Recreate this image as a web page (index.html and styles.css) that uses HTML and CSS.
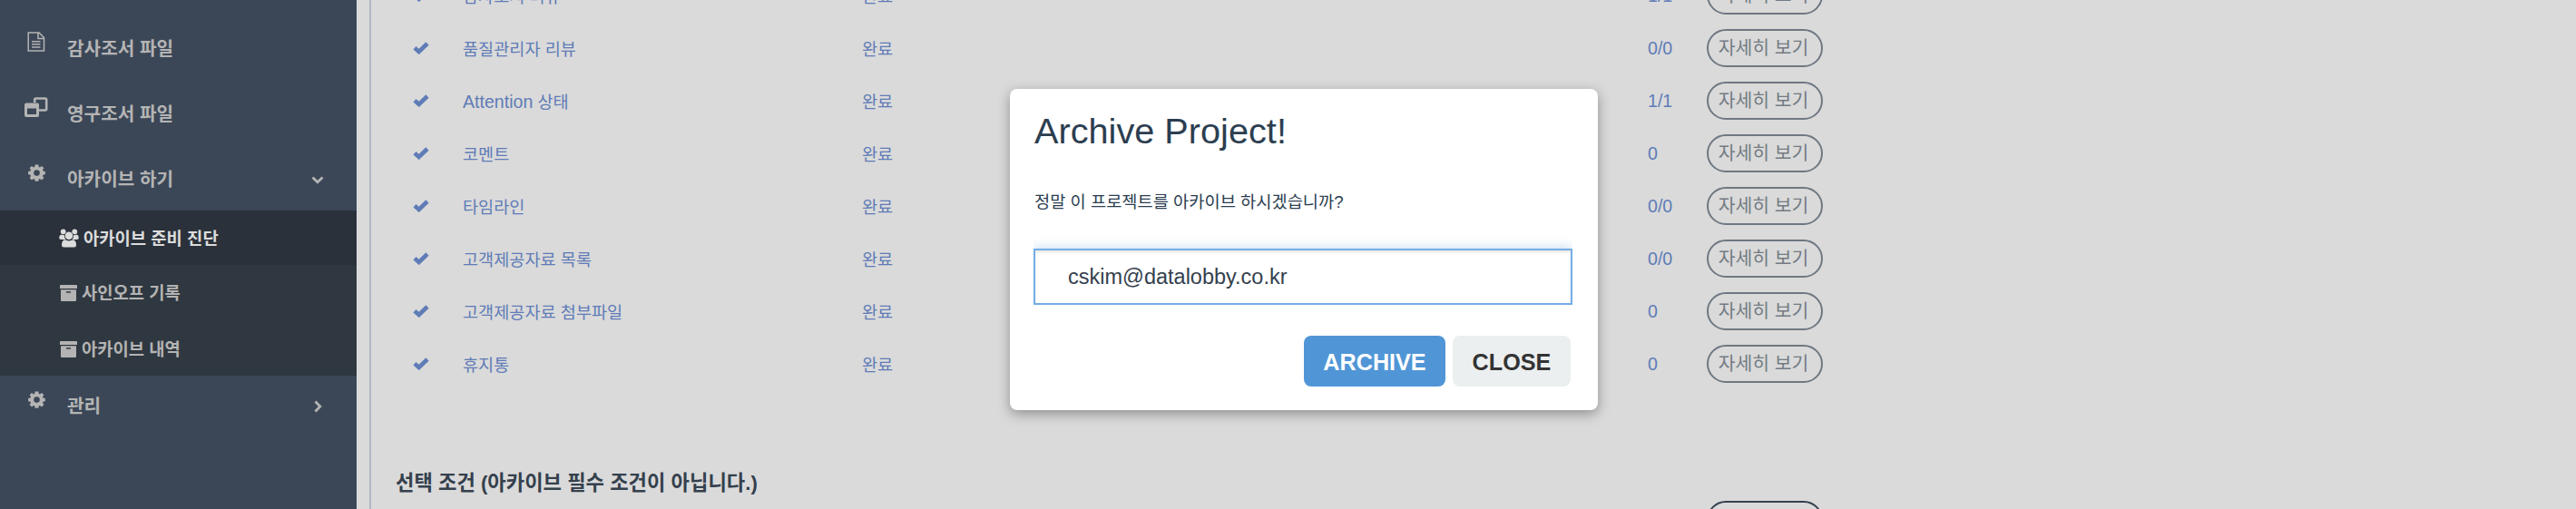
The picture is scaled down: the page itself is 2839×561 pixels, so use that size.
FILE: index.html
```html
<!DOCTYPE html>
<html lang="ko">
<head>
<meta charset="utf-8">
<title>Archive Project</title>
<link rel="stylesheet" href="styles.css">
</head>
<body>
<svg class="defs" aria-hidden="true">
  <symbol id="check" viewBox="0 0 18 14"><path d="M2 6.800L6.700 11L16 2" fill="none" stroke="currentColor" stroke-width="4.600"/></symbol>
  <symbol id="gear" viewBox="0 0 20 20"><path fill="currentColor" fill-rule="evenodd" d="M8 0.500h4l.4 2.600 1.200.5 2.200-1.500 2.500 2.500-1.500 2.100.5 1.300 2.500.4v3.500l-2.500.5-.5 1.200 1.500 2.200-2.500 2.500-2.200-1.500-1.200.5-.4 2.500H8l-.4-2.500-1.300-.5-2.100 1.500-2.500-2.500 1.500-2.200-.6-1.200L.1 11.900V8.400L2.600 8l.6-1.300-1.500-2.100 2.500-2.500 2.100 1.500 1.300-.5zM10 6.600a3.500 3.500 0 1 0 0 7 3.500 3.500 0 0 0 0-7z"/></symbol>
  <symbol id="box" viewBox="0 0 19 18"><path fill="currentColor" fill-rule="evenodd" d="M1 0h17q1 0 1 1v3H0V1q0-1 1-1zM1 5.200h17V17q0 1-1 1H2q-1 0-1-1zM7.600 7.200a.8.800 0 0 0 0 1.600h3.800a.8.800 0 0 0 0-1.600z"/></symbol>
</svg>
<div class="app">
  <nav class="sidebar">
    <a class="item"><span class="ico"><svg width="20" height="22" viewBox="0 0 20 22" fill="none" stroke="currentColor" stroke-width="1.500"><path d="M1.200 1H13l5.500 5.500V21H1.200zM12 1v6.500h6.500M5 10.700h9.500M5 13.800h9.500M5 17h9.500"/></svg></span><span class="label">감사조서 파일</span></a>
    <a class="item"><span class="ico"><svg width="26" height="22" viewBox="0 0 26 22"><path d="M11.200 6V3q0-1.500 1.500-1.500h10q1.500 0 1.500 1.500v10q0 1.500-1.500 1.500H16" fill="none" stroke="currentColor" stroke-width="2.600"/><path fill="currentColor" fill-rule="evenodd" d="M2 6.500h12q2 0 2 2V20q0 2-2 2H2q-2 0-2-2V8.500q0-2 2-2zM3 12.500V19h10v-6.500z"/></svg></span><span class="label">영구조서 파일</span></a>
    <a class="item"><span class="ico"><svg width="19" height="19"><use href="#gear"/></svg></span><span class="label">아카이브 하기</span><svg class="caret" width="14" height="9" viewBox="0 0 14 9"><path d="M1.500 1.500L7 6.800l5.500-5.300" fill="none" stroke="currentColor" stroke-width="2.800"/></svg></a>
    <div class="submenu">
      <a class="sub active"><svg width="22" height="21" viewBox="0 0 22 21" fill="currentColor"><circle cx="4.700" cy="3.300" r="2.900"/><circle cx="17.300" cy="3.300" r="2.900"/><circle cx="11" cy="7.700" r="4.300"/><path d="M2.600 6.500Q5 7.500 6 7q-.4 3.200 1.500 5H2.200Q0 12 .2 9.500.4 7 2.600 6.500zM19.400 6.500Q17 7.500 16 7q.4 3.200-1.500 5h5.300Q22 12 21.800 9.500 21.600 7 19.400 6.500zM6.500 12.300Q11 14.500 15.500 12.300 19 13 19 18q0 2.500-2.500 2.500h-11Q3 20.500 3 18q0-5 3.500-5.700z"/></svg><span>아카이브 준비 진단</span></a>
      <a class="sub"><svg width="19" height="18"><use href="#box"/></svg><span>사인오프 기록</span></a>
      <a class="sub lower"><svg width="19" height="18"><use href="#box"/></svg><span>아카이브 내역</span></a>
    </div>
    <a class="item last"><span class="ico"><svg width="19" height="19"><use href="#gear"/></svg></span><span class="label">관리</span><svg class="caret right" width="9" height="14" viewBox="0 0 9 14"><path d="M1.500 1.500L6.800 7l-5.300 5.500" fill="none" stroke="currentColor" stroke-width="2.800"/></svg></a>
  </nav>
  <main class="content">
    <div class="list">
      <div class="row"><svg class="check"><use href="#check"/></svg><span class="cell">감사조서 리뷰</span><span class="cell">완료</span><span class="count">1/1</span><button class="more">자세히 보기</button></div>
      <div class="row"><svg class="check"><use href="#check"/></svg><span class="cell">품질관리자 리뷰</span><span class="cell">완료</span><span class="count">0/0</span><button class="more">자세히 보기</button></div>
      <div class="row"><svg class="check"><use href="#check"/></svg><span class="cell"><span class="latin">Attention</span> 상태</span><span class="cell">완료</span><span class="count">1/1</span><button class="more">자세히 보기</button></div>
      <div class="row"><svg class="check"><use href="#check"/></svg><span class="cell">코멘트</span><span class="cell">완료</span><span class="count">0</span><button class="more">자세히 보기</button></div>
      <div class="row"><svg class="check"><use href="#check"/></svg><span class="cell">타임라인</span><span class="cell">완료</span><span class="count">0/0</span><button class="more">자세히 보기</button></div>
      <div class="row"><svg class="check"><use href="#check"/></svg><span class="cell">고객제공자료 목록</span><span class="cell">완료</span><span class="count">0/0</span><button class="more">자세히 보기</button></div>
      <div class="row"><svg class="check"><use href="#check"/></svg><span class="cell">고객제공자료 첨부파일</span><span class="cell">완료</span><span class="count">0</span><button class="more">자세히 보기</button></div>
      <div class="row"><svg class="check"><use href="#check"/></svg><span class="cell">휴지통</span><span class="cell">완료</span><span class="count">0</span><button class="more">자세히 보기</button></div>
    </div>
    <h2 class="heading">선택 조건 (아카이브 필수 조건이 아닙니다.)</h2>
    <div class="row optional"><button class="more dark"></button></div>
  </main>
</div>
<div class="modal">
  <h1 class="title">Archive Project!</h1>
  <p class="question">정말 이 프로젝트를 아카이브 하시겠습니까?</p>
  <div class="field"><input class="email" type="text" value="cskim@datalobby.co.kr"></div>
  <div class="actions"><button class="btn primary">ARCHIVE</button><button class="btn">CLOSE</button></div>
</div>
</body>
</html>
```
FILE: styles.css
```css
* { box-sizing: border-box; }
body {
  margin: 0;
  height: 561px;
  overflow: hidden;
  background: #dadada;
  font-family: "Liberation Sans", "Noto Sans CJK KR", sans-serif;
  font-size: 18.6px;
}
button, input { font-family: inherit; margin: 0; }
.defs { position: absolute; width: 0; height: 0; }
.app { display: flex; height: 561px; overflow: hidden; }

.sidebar {
  width: 393px;
  flex: none;
  padding-top: 16px;
  background: #3b4757;
  color: #b4b4b4;
  font-weight: 700;
}
.item {
  display: flex;
  align-items: center;
  height: 72px;
  padding: 4px 36px 0 27px;
  font-size: 20.2px;
}
.ico {
  display: flex;
  justify-content: center;
  width: 26px;
  margin: 0 21px 16px 0;
}
.label { flex: 1; padding-bottom: 3px; }
.caret.right { margin-right: 2px; }
.submenu { background: #2f3840; }
.sub {
  display: flex;
  align-items: center;
  gap: 5px;
  height: 61px;
  padding: 0 0 0 66px;
  font-size: 18.8px;
}
.sub span { padding-bottom: 2px; }
.sub.lower { padding-top: 2px; }
.sub.active {
  height: 60px;
  padding-left: 65px;
  background: #2a313b;
  color: #dcdcdc;
}
.item.last { height: 66px; padding-top: 2px; }

.content {
  flex: 1;
  margin-left: 14px;
  border-left: 2px solid #afb8c5;
}
.list { margin-top: -34px; }
.row {
  display: grid;
  grid-template-columns: 55px 440px 866px 65px 128px;
  align-items: center;
  height: 58px;
  padding-left: 46px;
  color: #5f7cb7;
  white-space: nowrap;
}
.cell { padding-bottom: 2px; }
.check { width: 18px; height: 14px; }
.latin, .count { font-size: 19.6px; }
.more {
  width: 128px;
  height: 42px;
  padding: 0 3px 5px 0;
  border: 2px solid #6f7882;
  border-radius: 21px;
  background: none;
  color: #737b83;
  font-size: 20.4px;
  white-space: nowrap;
}
.heading {
  margin: 87px 0 0 27px;
  color: #34404d;
  font-size: 22.2px;
  line-height: 32px;
}
.optional { margin-top: -5px; }
.more.dark { grid-column: 5; border-color: #34404d; }

.modal {
  position: absolute;
  left: 1113px;
  top: 98px;
  width: 648px;
  height: 354px;
  padding: 23px 28px 0 26px;
  border-radius: 8px;
  background: #fff;
  box-shadow: 0 4px 14px rgba(0, 0, 0, .35);
  color: #2c3e50;
}
.title { margin: 0 0 0 1px; font-size: 39.7px; font-weight: 400; line-height: 46px; }
.question { margin: 40px 0 0 1px; font-size: 18.7px; line-height: 32px; }
.field { padding-top: 24px; margin-top: 11px; overflow: hidden; }
.email {
  display: block;
  width: 594px;
  height: 62px;
  padding: 1px 0 0 36px;
  border: 2px solid #75ade5;
  outline: 0;
  box-shadow: 0 0 12px rgba(80, 150, 214, .4), inset 0 2px 3px rgba(0, 0, 0, .1);
  color: #34404d;
  font-size: 23.5px;
}
.actions { display: flex; justify-content: flex-end; gap: 8px; margin-top: 34px; padding-right: 2px; }
.btn {
  width: 130px;
  height: 56px;
  padding: 2px 0 0;
  border: 0;
  border-radius: 8px;
  background: #eceff0;
  color: #333;
  font-size: 25.2px;
  font-weight: 700;
}
.primary { width: 156px; background: #5096d6; color: #fff; }
```
